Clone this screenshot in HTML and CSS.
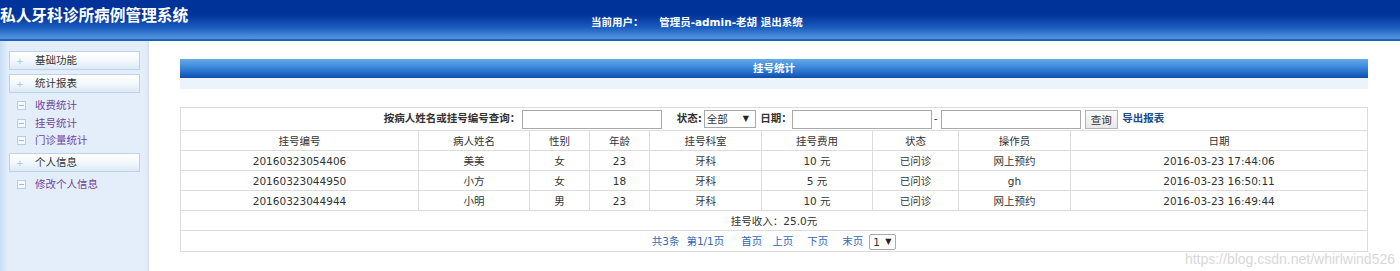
FILE: index.html
```html
<!DOCTYPE html>
<html lang="zh">
<head>
  <meta charset="UTF-8"/>
  <title>私人牙科诊所病例管理系统</title>
  <link rel="stylesheet" href="styles.css">
</head>
<body>
  <div class="top">
    <div class="logo">私人牙科诊所病例管理系统</div>
    <div class="user">
      <span>当前用户：</span>
      <span class="who">管理员-admin-老胡</span>
      <a href="#">退出系统</a>
    </div>
  </div>
  <div class="wrap">
    <div class="side">
      <div class="menu-head"><span class="plus">+</span>基础功能</div>
      <div class="menu-head"><span class="plus">+</span>统计报表</div>
      <ul class="menu-list">
        <li><span class="box"></span><a href="#">收费统计</a></li>
        <li><span class="box"></span><a href="#">挂号统计</a></li>
        <li><span class="box"></span><a href="#">门诊量统计</a></li>
      </ul>
      <div class="menu-head"><span class="plus">+</span>个人信息</div>
      <ul class="menu-list">
        <li><span class="box"></span><a href="#">修改个人信息</a></li>
      </ul>
    </div>
    <div class="main">
      <div class="panel-title">挂号统计</div>
      <div class="panel-band"></div>
      <table class="grid">
        <colgroup>
          <col style="width:238px"><col style="width:111px"><col style="width:60px"><col style="width:60px">
          <col style="width:112px"><col style="width:111px"><col style="width:86px"><col style="width:112px"><col>
        </colgroup>
        <tr class="search">
          <td colspan="9">
            <b>按病人姓名或挂号编号查询：</b><input type="text" class="ipt-name">
            <b class="lbl-state">状态:</b><span class="sel">全部</span>
            <b>日期：</b><input type="text" class="ipt-date"><span class="dash">-</span><input type="text" class="ipt-date">
            <button class="btn">查询</button>
            <a href="#" class="export">导出报表</a>
          </td>
        </tr>
        <tr>
          <td>挂号编号</td><td>病人姓名</td><td>性别</td><td>年龄</td><td>挂号科室</td><td>挂号费用</td><td>状态</td><td>操作员</td><td>日期</td>
        </tr>
        <tr>
          <td>20160323054406</td><td>美美</td><td>女</td><td>23</td><td>牙科</td><td>10 元</td><td>已问诊</td><td>网上预约</td><td>2016-03-23 17:44:06</td>
        </tr>
        <tr>
          <td>20160323044950</td><td>小方</td><td>女</td><td>18</td><td>牙科</td><td>5 元</td><td>已问诊</td><td>gh</td><td>2016-03-23 16:50:11</td>
        </tr>
        <tr>
          <td>20160323044944</td><td>小明</td><td>男</td><td>23</td><td>牙科</td><td>10 元</td><td>已问诊</td><td>网上预约</td><td>2016-03-23 16:49:44</td>
        </tr>
        <tr>
          <td colspan="9">挂号收入：25.0元</td>
        </tr>
        <tr class="pager">
          <td colspan="9">
            <a href="#">共3条</a><a href="#" class="p-info">第1/1页</a><a href="#" class="p-first">首页</a><a href="#" class="p-prev">上页</a><a href="#" class="p-next">下页</a><a href="#" class="p-last">末页</a><span class="page-sel">1</span>
          </td>
        </tr>
      </table>
    </div>
  </div>
  <div class="mark">https://blog.csdn.net/whirlwind526</div>
</body>
</html>
```

FILE: styles.css
```css
* {
  margin: 0;
  padding: 0;
  box-sizing: border-box;
}
body {
  font-family: "DejaVu Sans", "Noto Sans CJK SC", sans-serif;
  font-size: 10.5px;
  color: #333;
  background: #fff;
  height: 271px;
  overflow: hidden;
}
a {
  text-decoration: none;
}
.top {
  height: 41px;
  display: flex;
  align-items: flex-start;
  background: linear-gradient(to bottom, #003399 0%, #003399 38%, #1a5bbd 70%, #4a8fdc 95%);
  border-bottom: 2px solid #1f62b8;
  color: #fff;
}
.logo {
  font-family: "Noto Sans CJK SC", sans-serif;
  font-size: 15.7px;
  font-weight: bold;
  line-height: 16px;
  padding: 7px 0 0 0;
  width: 591px;
}
.user {
  font-weight: bold;
  padding-top: 15px;
  line-height: 14px;
}
.user .who {
  margin-left: 12px;
}
.user a {
  color: #fff;
}
.wrap {
  display: flex;
  height: 230px;
}
.side {
  width: 149px;
  background: linear-gradient(to right, #c9def4 0px, #e3eefa 8px, #e3eefa 146px, #cfe0f3 149px);
  padding: 10px 0 0 9px;
}
.menu-head {
  width: 131px;
  height: 19px;
  line-height: 17px;
  border: 1px solid #bcd3ec;
  background: linear-gradient(to bottom, #ffffff 0%, #f3f8fd 50%, #dde9f6 100%);
  margin-bottom: 4px;
  color: #333;
}
.plus {
  display: inline-block;
  width: 25px;
  padding-left: 6px;
  color: #a9c3df;
  font-size: 9px;
}
.menu-list {
  list-style: none;
  padding: 0 0 3px 8px;
}
.menu-list li {
  height: 17.5px;
  line-height: 17px;
  display: flex;
  align-items: center;
}
.menu-list a {
  color: #70449a;
}
.box {
  width: 9px;
  height: 9px;
  border: 1px solid #b8cde6;
  background: #f5f9fd;
  margin-right: 9px;
  position: relative;
}
.box::after {
  content: "";
  position: absolute;
  left: 1px;
  right: 1px;
  top: 3px;
  height: 1px;
  background: #9db8d8;
}
.main {
  flex: 1;
  padding: 18px 32px 0 31px;
}
.panel-title {
  height: 19px;
  line-height: 19px;
  text-align: center;
  color: #fff;
  font-weight: bold;
  background: linear-gradient(to bottom, #64abec 0%, #3a86d8 45%, #1559bb 90%, #0d4aa4 100%);
}
.panel-band {
  height: 11px;
  background: #edf3fb;
  margin-bottom: 18px;
}
.grid {
  width: 100%;
  border-collapse: collapse;
  table-layout: fixed;
  border: 1px solid #d6d6d6;
}
.grid td {
  border: 1px solid #dcdcdc;
  height: 20px;
  line-height: 18px;
  text-align: center;
  padding: 0;
  white-space: nowrap;
  color: #333;
}
.grid tr.search td {
  height: 23px;
}
.grid tr.pager td {
  height: 21px;
}
.search input {
  height: 19px;
  width: 140px;
  border: 1px solid #a9a9a9;
  vertical-align: middle;
}
.ipt-name {
  margin-left: 2px;
}
.lbl-state {
  margin-left: 11px;
}
.sel {
  display: inline-block;
  width: 52px;
  height: 18px;
  line-height: 16px;
  border: 1px solid #a9a9a9;
  vertical-align: middle;
  background: #fff;
  text-align: left;
  padding-left: 2px;
  margin: 0 1px 0 2px;
  position: relative;
}
.sel::after {
  content: "▼";
  position: absolute;
  right: 6px;
  top: 0;
  font-size: 8px;
  color: #222;
}
.dash {
  margin: 0 3px 0 2px;
}
.btn {
  height: 19px;
  padding: 0 5px;
  border: 1px solid #b5b5b5;
  background: linear-gradient(to bottom, #fafafa, #e8e8e8);
  font-family: inherit;
  font-size: 10.5px;
  color: #333;
  vertical-align: middle;
  margin-left: 1px;
}
.export {
  color: #1c4a8c;
  font-weight: bold;
  margin-left: 1px;
}
.pager a {
  color: #3767b5;
}
.pager .p-info {
  margin-left: 7px;
}
.pager .p-first {
  margin-left: 17px;
}
.pager .p-prev {
  margin-left: 10px;
}
.pager .p-next,
.pager .p-last {
  margin-left: 14px;
}
.page-sel {
  display: inline-block;
  width: 27px;
  height: 16px;
  line-height: 14px;
  border: 1px solid #a9a9a9;
  border-radius: 2px;
  vertical-align: middle;
  margin-left: 6px;
  background: #fff;
  text-align: left;
  padding-left: 3px;
  position: relative;
}
.page-sel::after {
  content: "▼";
  position: absolute;
  right: 4px;
  top: 0;
  font-size: 8px;
  color: #222;
}
.mark {
  position: absolute;
  right: 5px;
  top: 251px;
  font-family: "Liberation Sans", sans-serif;
  font-size: 14px;
  color: #d8d8d8;
}
```
